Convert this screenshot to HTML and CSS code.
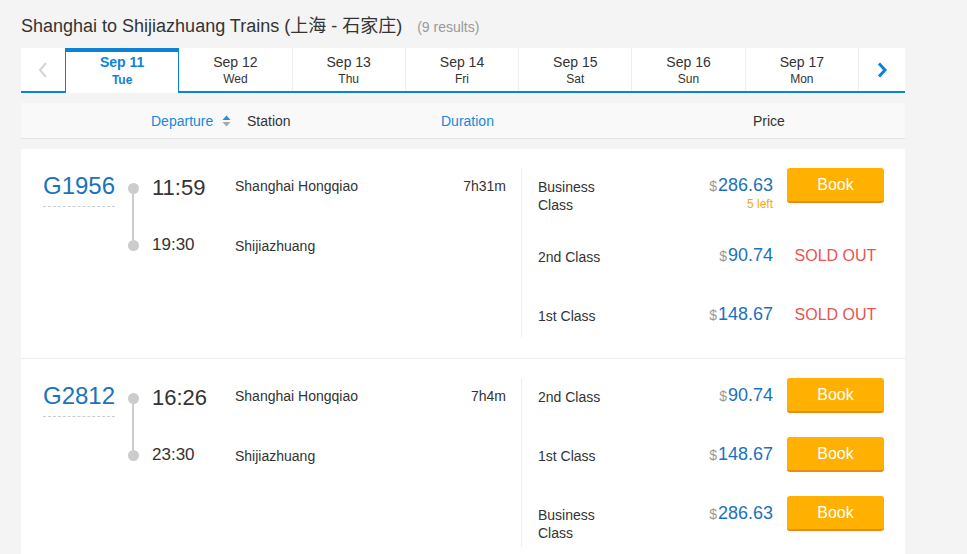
FILE: index.html
```html
<!DOCTYPE html>
<html>
<head>
  <title>Shanghai to Shijiazhuang Trains</title>
  <link rel="stylesheet" href="styles.css">
</head>
<body>
  <div class="page">
    <h1 class="title">Shanghai to Shijiazhuang Trains (上海 - 石家庄) <span class="count">(9 results)</span></h1>

    <div class="dates">
      <div class="arrow prev">
        <svg width="12" height="16" viewBox="0 0 12 16"><path d="M9 1 L3 8 L9 15" fill="none" stroke="#d4d4d4" stroke-width="2"/></svg>
      </div>
      <div class="date active"><div class="day">Sep 11</div><div class="wk">Tue</div></div>
      <div class="date"><div class="day">Sep 12</div><div class="wk">Wed</div></div>
      <div class="date"><div class="day">Sep 13</div><div class="wk">Thu</div></div>
      <div class="date"><div class="day">Sep 14</div><div class="wk">Fri</div></div>
      <div class="date"><div class="day">Sep 15</div><div class="wk">Sat</div></div>
      <div class="date"><div class="day">Sep 16</div><div class="wk">Sun</div></div>
      <div class="date"><div class="day">Sep 17</div><div class="wk">Mon</div></div>
      <div class="arrow next">
        <svg width="12" height="16" viewBox="0 0 12 16"><path d="M3 1.5 L9 8 L3 14.5" fill="none" stroke="#0b84d8" stroke-width="3"/></svg>
      </div>
    </div>

    <div class="thead">
      <div class="th th-dep">
        <span class="link">Departure</span>
        <svg class="sort" width="9" height="12" viewBox="0 0 9 12"><path d="M4.5 0.5 L8.5 5 L0.5 5 Z" fill="#2b8fd8"/><path d="M0.5 7 L8.5 7 L4.5 11.5 Z" fill="#a8a8a8"/></svg>
      </div>
      <div class="th th-station">Station</div>
      <div class="th th-dur"><span class="link">Duration</span></div>
      <div class="th th-price">Price</div>
    </div>

    <div class="trains">
      <div class="train">
        <div class="info">
          <div class="num"><span>G1956</span></div>
          <div class="track"><i class="dot"></i><i class="bar"></i><i class="dot"></i></div>
          <div class="stops">
            <div class="stop"><span class="time big">11:59</span><span class="station">Shanghai Hongqiao</span><span class="dur">7h31m</span></div>
            <div class="stop second"><span class="time">19:30</span><span class="station">Shijiazhuang</span></div>
          </div>
        </div>
        <div class="seats">
          <div class="seat">
            <div class="cls">Business Class</div>
            <div class="price"><div class="amt"><span class="cur">$</span>286.63</div><div class="left">5 left</div></div>
            <div class="act"><button class="book">Book</button></div>
          </div>
          <div class="seat">
            <div class="cls">2nd Class</div>
            <div class="price"><div class="amt"><span class="cur">$</span>90.74</div></div>
            <div class="act"><span class="sold">SOLD OUT</span></div>
          </div>
          <div class="seat">
            <div class="cls">1st Class</div>
            <div class="price"><div class="amt"><span class="cur">$</span>148.67</div></div>
            <div class="act"><span class="sold">SOLD OUT</span></div>
          </div>
        </div>
      </div>

      <div class="train">
        <div class="info">
          <div class="num"><span>G2812</span></div>
          <div class="track"><i class="dot"></i><i class="bar"></i><i class="dot"></i></div>
          <div class="stops">
            <div class="stop"><span class="time big">16:26</span><span class="station">Shanghai Hongqiao</span><span class="dur">7h4m</span></div>
            <div class="stop second"><span class="time">23:30</span><span class="station">Shijiazhuang</span></div>
          </div>
        </div>
        <div class="seats">
          <div class="seat">
            <div class="cls">2nd Class</div>
            <div class="price"><div class="amt"><span class="cur">$</span>90.74</div></div>
            <div class="act"><button class="book">Book</button></div>
          </div>
          <div class="seat">
            <div class="cls">1st Class</div>
            <div class="price"><div class="amt"><span class="cur">$</span>148.67</div></div>
            <div class="act"><button class="book">Book</button></div>
          </div>
          <div class="seat">
            <div class="cls">Business Class</div>
            <div class="price"><div class="amt"><span class="cur">$</span>286.63</div></div>
            <div class="act"><button class="book">Book</button></div>
          </div>
        </div>
      </div>
    </div>
  </div>
</body>
</html>
```

FILE: styles.css
```css
body {
  margin: 0;
  background-color: #f4f4f4;
  font-family: "Liberation Sans", Arial, "Noto Sans CJK SC", sans-serif;
  color: #333;
}

.page {
  width: 884px;
  margin-left: 21px;
}

.title {
  margin: 0 0 10px 0;
  padding-top: 14px;
  height: 24px;
  font-size: 18px;
  line-height: 24px;
  font-weight: normal;
  color: #333;
  overflow: hidden;
}

.title .count {
  margin-left: 10px;
  font-size: 14px;
  color: #999;
}

/* date tabs */
.dates {
  display: flex;
  align-items: flex-start;
  height: 43px;
  background-color: #fff;
  border-bottom: 2px solid #0b84d8;
  margin-bottom: 10px;
}

.arrow {
  height: 43px;
  display: flex;
  align-items: center;
  justify-content: center;
}

.arrow.prev {
  width: 44px;
}

.arrow.next {
  width: 46px;
  border-left: 1px solid #eee;
}

.date {
  flex: 1;
  height: 43px;
  box-sizing: border-box;
  padding-top: 6px;
  text-align: center;
  border-left: 1px solid #eee;
}

.date .day {
  font-size: 14px;
  line-height: 16px;
}

.date .wk {
  font-size: 12px;
  line-height: 16px;
  margin-top: 1px;
}

.date.active {
  height: 45px;
  margin-bottom: -2px;
  padding-top: 2px;
  border-top: 4px solid #0b84d8;
  border-left: 1px solid #0b84d8;
  border-right: 1px solid #0b84d8;
  background-color: #fff;
  color: #0b84d8;
  font-weight: bold;
}

.date.active + .date {
  border-left: none;
}

.date.active .wk {
  margin-top: 2px;
}

/* table header */
.thead {
  display: flex;
  align-items: center;
  height: 35px;
  background-color: #f9f9f9;
  border-bottom: 1px solid #e3e3e3;
  font-size: 14px;
  margin-bottom: 10px;
}

.th-dep {
  width: 226px;
  box-sizing: border-box;
  padding-left: 130px;
  display: flex;
  align-items: center;
}

.th-dep .sort {
  margin-left: 9px;
}

.th-station {
  width: 194px;
}

.th-dur {
  width: 312px;
}

.link {
  color: #1a88d8;
}

/* trains */
.trains {
  background-color: #fff;
}

.train {
  display: flex;
  padding: 19px 0 21px 0;
  border-bottom: 1px solid #eee;
}

.info {
  width: 500px;
  box-sizing: border-box;
  padding-left: 22px;
  padding-right: 15px;
  display: flex;
  align-items: flex-start;
}

.num {
  width: 72px;
}

.num span {
  display: block;
  font-size: 24px;
  line-height: 36px;
  padding-bottom: 2px;
  color: #1b72bc;
  border-bottom: 1px dashed #ccc;
  white-space: nowrap;
}

.track {
  width: 36px;
  padding-top: 15px;
  display: flex;
  flex-direction: column;
  align-items: center;
}

.track .dot {
  width: 11px;
  height: 11px;
  border-radius: 50%;
  background-color: #ccc;
}

.track .bar {
  width: 2px;
  height: 46px;
  background-color: #ccc;
}

.stops {
  flex: 1;
  padding-left: 1px;
}

.stop {
  display: flex;
  align-items: center;
  height: 40px;
}

.stop.second {
  margin-top: 17px;
}

.time {
  width: 83px;
  font-size: 17px;
}

.time.big {
  font-size: 22px;
}

.station {
  flex: 1;
  font-size: 14px;
}

.dur {
  font-size: 14px;
  margin-top: -4px;
}

.stop .station {
  margin-top: -4px;
}

.stop.second .station {
  margin-top: 2px;
}

.seats {
  flex: 1;
  border-left: 1px solid #eee;
  padding: 0 21px 5px 16px;
}

.seat {
  display: flex;
  align-items: flex-start;
  margin-bottom: 24px;
}

.seat:last-child {
  margin-bottom: 0;
}

.cls {
  width: 80px;
  padding-top: 10px;
  font-size: 14px;
  line-height: 18px;
}

.price {
  flex: 1;
  padding-top: 6px;
  text-align: right;
}

.amt {
  font-size: 18px;
  line-height: 22px;
  color: #1b72bc;
}

.cur {
  font-size: 14px;
  color: #999;
  margin-right: 1px;
}

.left {
  font-size: 12px;
  line-height: 14px;
  color: #f5a623;
}

.act {
  width: 97px;
  margin-left: 14px;
  text-align: center;
}

.book {
  width: 97px;
  height: 35px;
  padding: 0;
  border: none;
  border-bottom: 2px solid #e88a14;
  border-radius: 3px;
  background-color: #ffb000;
  color: #fff;
  font-family: inherit;
  font-size: 16px;
  cursor: pointer;
}

.sold {
  display: block;
  line-height: 35px;
  font-size: 16px;
  color: #ea5350;
}
```
